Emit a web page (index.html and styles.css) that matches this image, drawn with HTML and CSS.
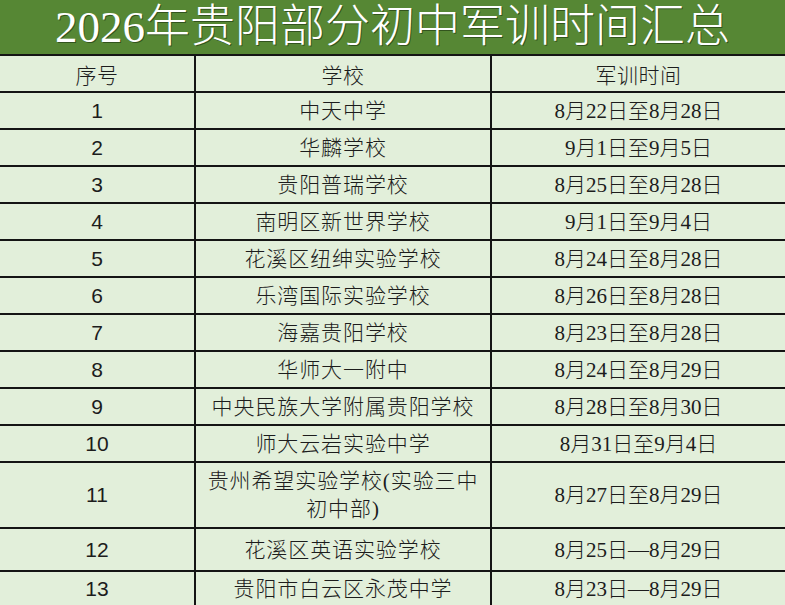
FILE: index.html
```html
<!DOCTYPE html>
<html lang="zh-CN">
<head>
<meta charset="utf-8">
<title>2026年贵阳部分初中军训时间汇总</title>
<link rel="stylesheet" href="styles.css">
</head>
<body>
<div class="sheet">
  <div class="title">2026年贵阳部分初中军训时间汇总</div>
  <table class="grid">
    <colgroup>
      <col class="c-no">
      <col class="c-school">
      <col class="c-date">
    </colgroup>
    <thead>
      <tr class="row">
        <th class="cjk">序号</th>
        <th class="cjk">学校</th>
        <th class="cjk">军训时间</th>
      </tr>
    </thead>
    <tbody>
      <tr class="row"><td class="no">1</td><td class="txt name">中天中学</td><td class="txt">8月22日至8月28日</td></tr>
      <tr class="row"><td class="no">2</td><td class="txt name">华麟学校</td><td class="txt">9月1日至9月5日</td></tr>
      <tr class="row"><td class="no">3</td><td class="txt name">贵阳普瑞学校</td><td class="txt">8月25日至8月28日</td></tr>
      <tr class="row"><td class="no">4</td><td class="txt name">南明区新世界学校</td><td class="txt">9月1日至9月4日</td></tr>
      <tr class="row"><td class="no">5</td><td class="txt name">花溪区纽绅实验学校</td><td class="txt">8月24日至8月28日</td></tr>
      <tr class="row"><td class="no">6</td><td class="txt name">乐湾国际实验学校</td><td class="txt">8月26日至8月28日</td></tr>
      <tr class="row"><td class="no">7</td><td class="txt name">海嘉贵阳学校</td><td class="txt">8月23日至8月28日</td></tr>
      <tr class="row"><td class="no">8</td><td class="txt name">华师大一附中</td><td class="txt">8月24日至8月29日</td></tr>
      <tr class="row"><td class="no">9</td><td class="txt name">中央民族大学附属贵阳学校</td><td class="txt">8月28日至8月30日</td></tr>
      <tr class="row"><td class="no">10</td><td class="txt name">师大云岩实验中学</td><td class="txt">8月31日至9月4日</td></tr>
      <tr class="row tall"><td class="no">11</td><td class="txt name">贵州希望实验学校(实验三中<br>初中部)</td><td class="txt">8月27日至8月29日</td></tr>
      <tr class="row mid"><td class="no">12</td><td class="txt name">花溪区英语实验学校</td><td class="txt">8月25日—8月29日</td></tr>
      <tr class="row last"><td class="no">13</td><td class="txt name">贵阳市白云区永茂中学</td><td class="txt">8月23日—8月29日</td></tr>
    </tbody>
  </table>
</div>
</body>
</html>
```

FILE: styles.css
```css
html, body {
  margin: 0;
  padding: 0;
  background: #e2efda;
}

.sheet {
  width: 785px;
  height: 605px;
  overflow: hidden;
  background: #e2efda;
}

.title {
  height: 54px;
  background: #568734;
  color: #ffffff;
  font-family: "Liberation Serif", "Noto Sans CJK SC", serif;
  font-weight: 300;
  font-size: 45px;
  line-height: 54px;
  text-align: center;
  text-shadow: 1px 1px 0 rgba(20, 40, 10, 0.55);
  white-space: nowrap;
}

.grid {
  width: 785px;
  border-collapse: collapse;
  table-layout: fixed;
  color: #1c1c1c;
}

.c-no { width: 195px; }
.c-school { width: 296px; }
.c-date { width: 294px; }

.grid th,
.grid td {
  border: 2px solid #141414;
  padding: 0;
  text-align: center;
  vertical-align: middle;
  font-weight: 300;
}

.grid th:first-child,
.grid td:first-child { border-left: none; }
.grid th:last-child,
.grid td:last-child { border-right: none; }
.grid thead th { border-top: 2px solid #141414; }

.row { height: 37px; }
.row.tall { height: 66px; }
.row.mid { height: 43px; }
.row.last { height: 35px; }

.cjk,
.txt {
  font-family: "Liberation Serif", "Noto Sans CJK SC", serif;
  font-size: 21px;
  line-height: 28px;
}

.txt.name {
  letter-spacing: 0.9px;
}

.cjk {
  font-family: "Noto Sans CJK SC", sans-serif;
  letter-spacing: 0.5px;
}

.no {
  font-family: "Liberation Sans", Arial, sans-serif;
  font-size: 21px;
  font-weight: 400 !important;
}
```
